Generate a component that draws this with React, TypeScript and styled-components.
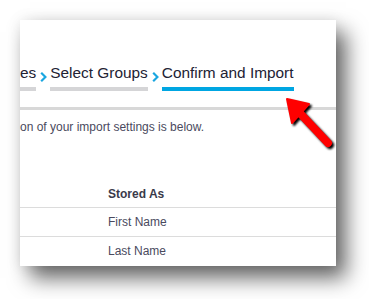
import styled, { createGlobalStyle } from "styled-components";

const GlobalStyle = createGlobalStyle`
  body {
    margin: 0;
    background: #ffffff;
    font-family: "Liberation Sans", Arial, sans-serif;
  }
`;

type Step = { label: string; active?: boolean };

const steps: Step[] = [
  { label: "es" },
  { label: "Select Groups" },
  { label: "Confirm and Import", active: true },
];

const rows = ["First Name", "Last Name"];

export default function App() {
  return (
    <>
      <GlobalStyle />
      <Frame>
        <Card>
          <Steps>
            {steps.map((step, i) => (
              <StepGroup key={step.label}>
                {i > 0 && (
                  <Chevron viewBox="0 0 7 10" width="7" height="10">
                    <polyline points="1.2,0.8 5.4,5 1.2,9.2" fill="none" stroke="#1aa6e0" strokeWidth="2.2" />
                  </Chevron>
                )}
                <StepItem>
                  <StepLabel>{step.label}</StepLabel>
                  <StepBar $active={step.active} />
                </StepItem>
              </StepGroup>
            ))}
          </Steps>
          <Divider />
          <Intro>on of your import settings is below.</Intro>
          <Table>
            <HeadCell />
            <HeadCell>Stored As</HeadCell>
            {rows.map((r) => (
              <Row key={r}>
                <Cell />
                <Cell>{r}</Cell>
              </Row>
            ))}
          </Table>
          <Pointer viewBox="0 0 60 60" width="60" height="60">
            <defs>
              <filter id="soft" x="-20%" y="-20%" width="140%" height="140%">
                <feGaussianBlur stdDeviation="1" />
              </filter>
            </defs>
            <g transform="translate(2 2)" fill="#000" stroke="#000" filter="url(#soft)">
              <line x1="15" y1="15" x2="46" y2="48" strokeWidth="8" strokeLinecap="round" />
              <polygon points="5,4 27,9 10,28" strokeWidth="2" strokeLinejoin="round" />
            </g>
            <g fill="#ff0000" stroke="#ff0000">
              <line x1="15" y1="15" x2="46" y2="48" strokeWidth="8" strokeLinecap="round" />
              <polygon points="5,4 27,9 10,28" strokeWidth="2" strokeLinejoin="round" />
            </g>
          </Pointer>
        </Card>
      </Frame>
    </>
  );
}

const Frame = styled.div`
  padding: 20px 0 0 20px;
  width: 369px;
  height: 299px;
  box-sizing: border-box;
`;

const Card = styled.div`
  position: relative;
  width: 316px;
  height: 246px;
  background: #ffffff;
  box-shadow: 0 0 14px rgba(0, 0, 0, 0.08), 10px 12px 20px rgba(0, 0, 0, 0.6);
`;

const Steps = styled.div`
  display: flex;
  align-items: flex-start;
  padding-top: 44px;
  gap: 4px;
`;

const StepGroup = styled.div`
  display: flex;
  align-items: flex-start;
  gap: 3px;
`;

const StepItem = styled.div`
  display: flex;
  flex-direction: column;
  gap: 5px;
`;

const StepLabel = styled.span`
  font-size: 15.4px;
  line-height: 18px;
  color: #222233;
  white-space: nowrap;
`;

const Chevron = styled.svg`
  margin-top: 8px;
  flex: none;
`;

const StepBar = styled.div<{ $active?: boolean }>`
  height: 4px;
  background: ${(p) => (p.$active ? "#00a6e2" : "#d5d5d7")};
`;

const Divider = styled.div`
  margin-top: 16px;
  height: 3px;
  background: #d8d8d8;
`;

const Intro = styled.p`
  margin: 10px 0 0;
  font-size: 12px;
  line-height: 14px;
  color: #4a4a5e;
`;

const Table = styled.div`
  display: grid;
  grid-template-columns: 88px 1fr;
  margin-top: 53px;
`;

const HeadCell = styled.div`
  font-size: 12px;
  font-weight: bold;
  line-height: 14px;
  color: #3a3a4a;
  padding-bottom: 6px;
`;

const Row = styled.div`
  display: contents;
`;

const Cell = styled.div`
  border-top: 1px solid #dcdcdc;
  height: 28px;
  display: flex;
  align-items: center;
  font-size: 12px;
  line-height: 14px;
  color: #4a4a5e;
`;

const Pointer = styled.svg`
  position: absolute;
  left: 262px;
  top: 75px;
  overflow: visible;
`;
